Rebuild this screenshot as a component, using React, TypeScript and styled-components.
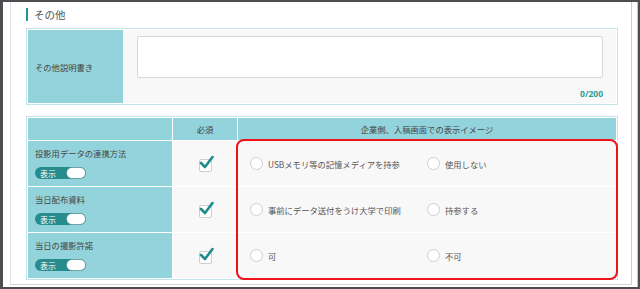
import React from 'react';
import styled, { createGlobalStyle } from 'styled-components';

const GlobalStyle = createGlobalStyle`
  html, body {
    margin: 0;
    padding: 0;
    background: #4d4d52;
    font-family: "Noto Sans CJK JP", "Noto Sans", sans-serif;
    color: #555;
  }
`;

const Frame = styled.div`
  margin: 2px 2px 0 3px;
  height: 285px;
  background: #fff;
  display: flex;
  padding: 0 5px 0 7px;
  box-sizing: border-box;
  border-right: 1px solid #c8c8c8;
`;

const Panel = styled.div`
  flex: 1;
  border-left: 1px solid #e2e2e2;
  border-right: 1px solid #cfcfcf;
  border-bottom: 1px solid #d6d6d6;
  padding: 6px 13px 0 15px;
  box-sizing: border-box;
  height: 283px;
`;

const Title = styled.h2`
  margin: 0 0 7px;
  font-size: 10.5px;
  font-weight: normal;
  color: #555;
  line-height: 14px;
  border-left: 2px solid #1e9a96;
  padding-left: 6px;
  height: 13px;
  display: flex;
  align-items: center;
`;

const Box = styled.div`
  border: 1px solid #c3e6ea;
  padding: 1px;
  background: #fff;
  display: flex;
  height: 77px;
  box-sizing: border-box;
  margin-bottom: 11px;
`;

const LabelCell = styled.div`
  width: 95px;
  background: #93d4dc;
  display: flex;
  align-items: center;
  padding-left: 7px;
  box-sizing: border-box;
  font-size: 8.3px;
  color: #444;
`;

const FieldCell = styled.div`
  flex: 1;
  background: #f8f8f8;
  padding: 6px 13px 0 14px;
  display: flex;
  flex-direction: column;
`;

const TextArea = styled.textarea`
  height: 42px;
  box-sizing: border-box;
  border: 1px solid #d8d8d8;
  border-radius: 2px;
  background: #fff;
  resize: none;
  outline: none;
`;

const Counter = styled.div`
  text-align: right;
  margin-top: 10px;
  font-family: "Open Sans", sans-serif;
  font-weight: 700;
  font-size: 8.5px;
  color: #2c9c98;
`;

const TableWrap = styled.div`
  position: relative;
`;

const Grid = styled.div`
  border: 1px solid #c3e6ea;
  padding: 1px;
  background: #fff;
  display: grid;
  grid-template-columns: 144px 64px 1fr;
  grid-template-rows: 22px 45px 45px 45px;
  gap: 1px;
`;

const HeadCell = styled.div`
  background: #93d4dc;
  display: flex;
  align-items: center;
  justify-content: center;
  font-size: 8.3px;
  color: #444;
`;

const RowLabel = styled.div`
  background: #93d4dc;
  padding: 6px 0 0 7px;
  font-size: 8.3px;
  color: #444;
  display: flex;
  flex-direction: column;
  gap: 8px;
`;

const Toggle = styled.div`
  width: 51px;
  height: 12px;
  border-radius: 6px;
  background: #268c8e;
  display: flex;
  align-items: center;
  justify-content: space-between;
  padding: 0 1px 0 5px;
  box-sizing: border-box;
  color: #fff;
  font-size: 8px;
`;

const Knob = styled.span`
  width: 18px;
  height: 10px;
  border-radius: 5px;
  background: #fff;
  box-shadow: 0 0 0 0.5px #bbb;
`;

const CheckCell = styled.div`
  background: #f8f8f8;
  display: flex;
  align-items: center;
  justify-content: center;
`;

const CheckBox = styled.span`
  position: relative;
  width: 11px;
  height: 11px;
  border: 1px solid #cfcfcf;
  border-radius: 2px;
  background: #fff;
  margin-top: 3px;
  svg {
    position: absolute;
    left: -1px;
    top: -5px;
  }
`;

const OptionCell = styled.div`
  background: #f8f8f8;
  display: flex;
  align-items: center;
  padding-left: 12px;
`;

const Option = styled.label<{ wide?: boolean }>`
  display: flex;
  align-items: center;
  gap: 5px;
  width: ${({ wide }) => (wide ? '177px' : 'auto')};
  font-size: 8.3px;
  color: #555;
`;

const Radio = styled.span`
  width: 11px;
  height: 11px;
  border-radius: 50%;
  border: 1px solid #cfcfcf;
  background: #fff;
`;

const Highlight = styled.div`
  position: absolute;
  left: 210px;
  top: 23px;
  right: 0;
  bottom: 0;
  border: 2px solid #f0121b;
  border-radius: 8px;
  pointer-events: none;
`;

const rows = [
  { label: '投影用データの連携方法', a: 'USBメモリ等の記憶メディアを持参', b: '使用しない' },
  { label: '当日配布資料', a: '事前にデータ送付をうけ大学で印刷', b: '持参する' },
  { label: '当日の撮影許諾', a: '可', b: '不可' },
];

const Check = () => (
  <svg width="15" height="14" viewBox="0 0 15 14">
    <path d="M2 8 L6 12 L13.5 2" fill="none" stroke="#1f8c8c" strokeWidth="2.6" strokeLinecap="round" strokeLinejoin="round" />
  </svg>
);

const App: React.FC = () => {
  return (
    <>
      <GlobalStyle />
      <Frame>
        <Panel>
          <Title>その他</Title>
          <Box>
            <LabelCell>その他説明書き</LabelCell>
            <FieldCell>
              <TextArea />
              <Counter>0/200</Counter>
            </FieldCell>
          </Box>
          <TableWrap>
            <Grid>
              <HeadCell />
              <HeadCell>必須</HeadCell>
              <HeadCell>企業側、入稿画面での表示イメージ</HeadCell>
              {rows.map((r) => (
                <React.Fragment key={r.label}>
                  <RowLabel>
                    {r.label}
                    <Toggle>
                      表示
                      <Knob />
                    </Toggle>
                  </RowLabel>
                  <CheckCell>
                    <CheckBox>
                      <Check />
                    </CheckBox>
                  </CheckCell>
                  <OptionCell>
                    <Option wide>
                      <Radio />
                      {r.a}
                    </Option>
                    <Option>
                      <Radio />
                      {r.b}
                    </Option>
                  </OptionCell>
                </React.Fragment>
              ))}
            </Grid>
            <Highlight />
          </TableWrap>
        </Panel>
      </Frame>
    </>
  );
};

export default App;
